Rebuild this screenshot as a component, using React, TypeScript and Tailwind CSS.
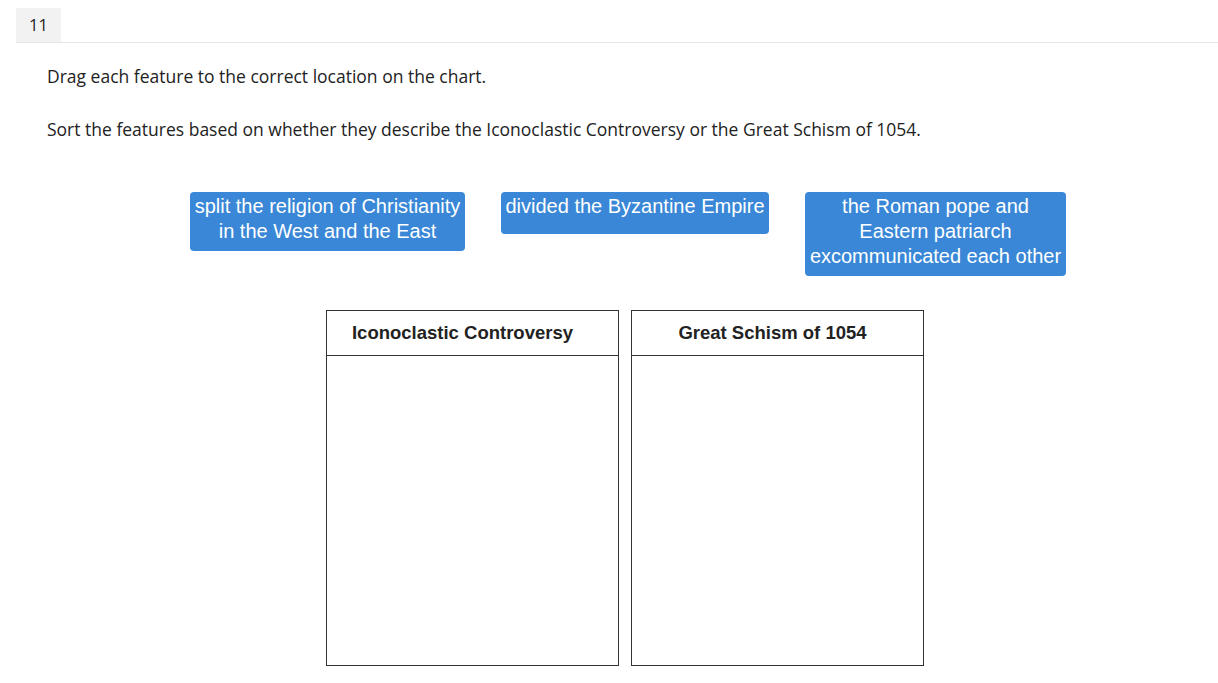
export default function App() {
  const tiles = [
    "split the religion of Christianity in the West and the East",
    "divided the Byzantine Empire",
    "the Roman pope and Eastern patriarch excommunicated each other",
  ];
  const widths = ["w-[275px]", "w-[268px]", "w-[261px]"];
  const heads = [
    { h: "Iconoclastic Controversy", pad: "pr-[20px]" },
    { h: "Great Schism of 1054", pad: "pr-[10px]" },
  ];
  return (
    <div className="w-[1218px] h-[683px] bg-white overflow-hidden" style={{ fontFamily: '"Open Sans", sans-serif' }}>
      <div className="pl-4 pt-2">
        <div className="border-b border-[#e6e6e6]">
          <div className="w-[45px] h-[34px] bg-[#f2f2f2] flex items-center justify-center text-[16.5px] text-[#222]">11</div>
        </div>
      </div>
      <div className="pl-[47px] pt-[21px] text-[17.5px] leading-6 text-[#222]">
        <p>Drag each feature to the correct location on the chart.</p>
        <p className="mt-[29px]">Sort the features based on whether they describe the Iconoclastic Controversy or the Great Schism of 1054.</p>
      </div>
      <div className="flex items-start gap-[36px] pl-[190px] mt-[51px]" style={{ fontFamily: '"Liberation Sans", Arial, sans-serif' }}>
        {tiles.map((t, i) => (
          <div key={i} className={`${widths[i]} min-h-[42px] bg-[#3987d6] rounded-[4px] text-white text-[20px] leading-[25px] text-center pt-[2px] pb-[7px] whitespace-nowrap`}>
            {i === 0 ? (<>split the religion of Christianity<br />in the West and the East</>) : i === 2 ? (<>the Roman pope and<br />Eastern patriarch<br />excommunicated each other</>) : t}
          </div>
        ))}
      </div>
      <div className="flex gap-[12px] pl-[326px] mt-[34px]" style={{ fontFamily: '"Liberation Sans", Arial, sans-serif' }}>
        {heads.map(({ h, pad }) => (
          <div key={h} className="w-[293px] h-[356px] border border-[#333] flex flex-col">
            <div className={`h-[45px] border-b border-[#333] flex items-center justify-center ${pad} font-bold text-[18.5px] text-[#222]`}>{h}</div>
            <div className="flex-1" />
          </div>
        ))}
      </div>
    </div>
  );
}
